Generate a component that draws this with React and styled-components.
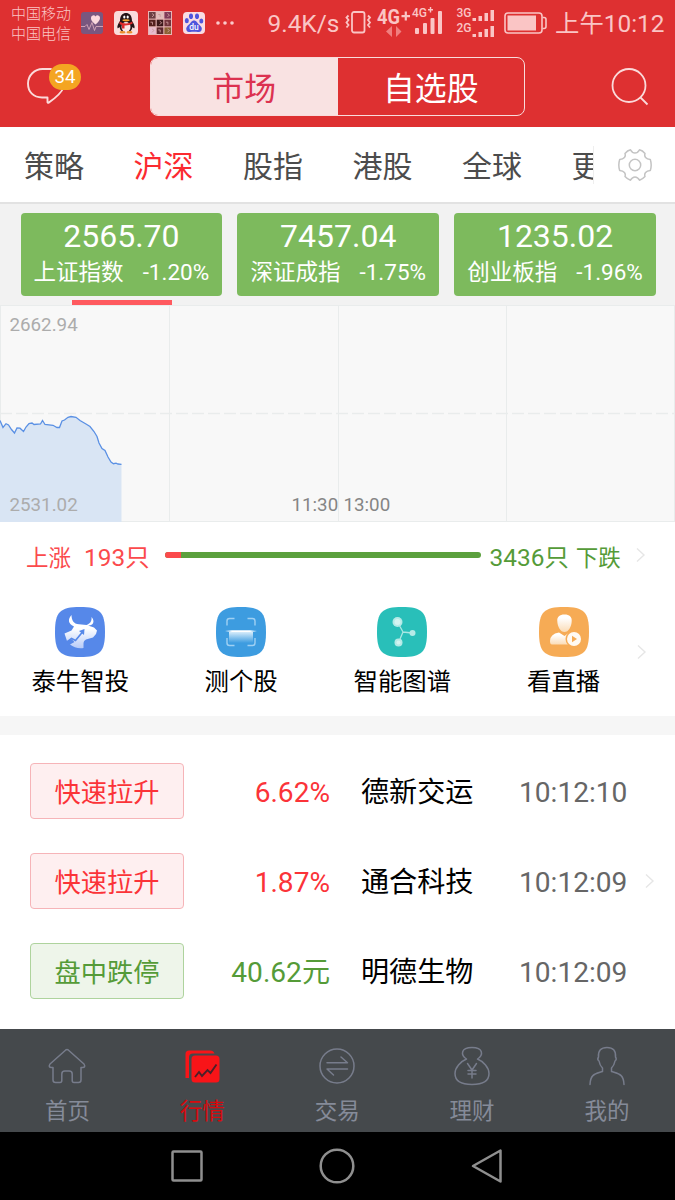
import styled, { createGlobalStyle } from 'styled-components';

const GlobalStyle = createGlobalStyle`
  * {
    box-sizing: border-box;
  }
  body {
    margin: 0;
    background-color: #ffffff;
    font-family: Roboto, 'Noto Sans CJK SC', sans-serif;
    font-weight: 400;
  }
  svg {
    display: block;
    flex-shrink: 0;
  }
`;

const Screen = styled.div`
  display: flex;
  flex-direction: column;
  width: 675px;
  height: 1200px;
  overflow: hidden;
  background-color: #ffffff;
  white-space: nowrap;
`;

/* header */

const Header = styled.header`
  height: 127px;
  background-color: #de3031;
`;

const StatusBar = styled.div`
  display: flex;
  align-items: center;
  height: 46px;
  padding-left: 11px;
  color: #fac5c5;
`;

const Carriers = styled.div`
  flex-shrink: 0;
  width: 70px;
  padding-top: 2px;
  font-size: 15px;
  line-height: 20px;
  font-weight: 300;
`;

const StatusText = styled.span`
  font-size: 24.4px;
  line-height: 44px;
  padding-top: 2px;
  margin-left: ${(props) => props.$left || 0}px;
`;

const NoticeIcons = styled.div`
  display: flex;
  flex-shrink: 0;
  align-items: center;
  gap: 10.5px;
  width: 264px;
`;

const TitleBar = styled.div`
  display: flex;
  align-items: center;
  height: 81px;
  padding: 0 26px;
`;

const MessageButton = styled.div`
  position: relative;
  width: 124px;
  height: 38px;
`;

const Badge = styled.span`
  position: absolute;
  left: 23px;
  top: -4px;
  width: 32px;
  height: 26px;
  border-radius: 13px;
  background-color: #f4a522;
  color: #ffffff;
  font-size: 18.75px;
  line-height: 27px;
  text-align: center;
`;

const Segment = styled.div`
  display: flex;
  width: 375px;
  height: 59px;
  margin-right: 86px;
  border: 1.5px solid #f9dcdc;
  border-radius: 8px;
  overflow: hidden;
`;

const SegmentItem = styled.div`
  flex: 1;
  padding-top: 2px;
  font-size: 31.9px;
  line-height: 58px;
  text-align: center;
  color: ${(props) => (props.$active ? '#dc3250' : '#ffffff')};
  background-color: ${(props) => (props.$active ? '#f9e2e2' : 'transparent')};
`;

/* tabs */

const TabBar = styled.nav`
  display: flex;
  align-items: center;
  height: 77px;
  border-bottom: 2px solid #e2e2e2;
`;

const Tabs = styled.div`
  display: flex;
  gap: 49.5px;
  width: 594px;
  height: 38px;
  padding-left: 24px;
  overflow: hidden;
  border-right: 1px solid #eeeeee;
  margin-right: 24px;
`;

const Tab = styled.span`
  flex-shrink: 0;
  font-size: 30px;
  line-height: 41px;
  color: ${(props) => (props.$active ? '#fb2a30' : '#4c4c4c')};
`;

/* index cards */

const CardStrip = styled.div`
  display: flex;
  gap: 15px;
  height: 96px;
  padding: 9px 19px 0 20.5px;
  background-color: #f2f2f2;
`;

const Card = styled.div`
  flex: 1;
  height: 83px;
  border-radius: 4px;
  background-color: #7dba5d;
  color: #ffffff;
  text-align: center;
`;

const CardValue = styled.div`
  font-size: 32px;
  line-height: 38px;
  padding-top: 4px;
`;

const CardDetail = styled.div`
  display: flex;
  justify-content: center;
  gap: 19px;
  font-size: 22.5px;
  line-height: 34px;
`;

const Underline = styled.div`
  height: 5px;
  background-color: #f2f2f2;
  padding-left: 72px;
  &::after {
    content: '';
    display: block;
    width: 100px;
    height: 5px;
    background-color: #ff5a5f;
  }
`;

/* chart */

const ChartBox = styled.div`
  height: 217px;
`;

/* rise and fall */

const RiseFall = styled.div`
  display: flex;
  align-items: center;
  height: 68px;
  padding-left: 26px;
`;

const Count = styled.span`
  padding-top: 3px;
  font-size: ${(props) => (props.$label ? 22.5 : 24.4)}px;
  line-height: 36px;
  color: ${(props) => (props.$up ? '#fb4a4c' : '#559b38')};
  margin-left: ${(props) => props.$left || 0}px;
`;

const RatioBar = styled.div`
  display: flex;
  width: 316px;
  height: 6px;
  margin: 0 9px 2px 15px;
  border-radius: 3px;
  overflow: hidden;
  background-color: #5ba03d;
`;

const RatioUp = styled.div`
  background-color: #fb4a4c;
`;

const RiseFallArrow = styled.div`
  margin: 0 0 3px 15px;
`;

/* shortcuts */

const Shortcuts = styled.div`
  display: flex;
  height: 126px;
  padding-top: 17px;
`;

const Shortcut = styled.div`
  display: flex;
  flex-direction: column;
  align-items: center;
  width: 161.25px;
  &:first-child {
    width: 160.5px;
  }
`;

const ShortcutLabel = styled.span`
  margin-top: 7px;
  font-size: 24.4px;
  line-height: 36px;
  color: #000000;
`;

const ShortcutArrow = styled.div`
  margin: 37px 0 0 -7px;
`;

const Divider = styled.div`
  height: 19px;
  background-color: #f6f6f6;
`;

/* alerts */

const AlertPanel = styled.div`
  display: flex;
  align-items: center;
  height: 294px;
  padding-bottom: 2px;
`;

const AlertList = styled.div`
  width: 645px;
`;

const AlertRow = styled.div`
  display: flex;
  align-items: center;
  height: 90px;
  padding-left: 30px;
  font-size: 28.1px;
  line-height: 40px;
`;

const Tag = styled.span`
  width: 154px;
  height: 56px;
  border: 1.5px solid ${(props) => (props.$up ? '#f6b4b8' : '#aed39d')};
  border-radius: 4px;
  background-color: ${(props) => (props.$up ? '#feeff0' : '#eef5ea')};
  color: ${(props) => (props.$up ? '#fb3338' : '#559b38')};
  font-size: 26.25px;
  line-height: 58px;
  text-align: center;
`;

const Change = styled.span`
  width: 146px;
  padding-top: 3px;
  text-align: right;
  color: ${(props) => (props.$up ? '#fb3338' : '#559b38')};
`;

const StockName = styled.span`
  width: 158px;
  margin-left: 31px;
  padding-top: 4px;
  color: #000000;
`;

const Time = styled.span`
  padding-top: 3px;
  color: #666666;
`;

/* bottom bars */

const BottomNav = styled.nav`
  display: grid;
  grid-template-columns: repeat(5, 134.9px);
  height: 103px;
  background-color: #45494c;
`;

const NavItem = styled.div`
  display: flex;
  flex-direction: column;
  align-items: center;
  padding-top: 17px;
  color: ${(props) => (props.$active ? '#d60a0e' : '#858b99')};
  font-size: 22.5px;
  line-height: 34px;
`;

const NavLabel = styled.span`
  margin-top: 8px;
`;

const SystemBar = styled.div`
  display: flex;
  flex: 1;
  align-items: center;
  justify-content: center;
  gap: 114px;
  padding-right: 1px;
  background-color: #000000;
`;

const SQUIRCLE = 'M25 0C45 0 50 5 50 25S45 50 25 50 0 45 0 25 5 0 25 0Z';

const HealthIcon = () => (
  <svg width="22" height="22" viewBox="0 0 22 22">
    <rect width="22" height="22" rx="3" fill="#79577f" />
    <path d="M14.500 12.500C11 9.500 10 8 10 6a2.400 2.400 0 0 1 4.500-1.400A2.400 2.400 0 0 1 19 6c0 2-1.500 3.800-4.500 6.500Z" fill="#fbd9dd" />
    <path d="M0 14.500h4l2-2 2 5 3-7 2.500 8 1.500-4h7" fill="none" stroke="#d7a9bb" strokeWidth="0.9" />
  </svg>
);

const PenguinIcon = () => (
  <svg width="24" height="24" viewBox="0 0 24 24">
    <rect width="24" height="24" rx="4" fill="#fadcdc" />
    <path d="M6 10C6 4 9 2 12 2s6 2 6 8c2 3 3 5 2.500 7-.6.800-1.500-.5-2-1-.5 2-1 3-2 4H7.500c-1-1-1.500-2-2-4-.5.500-1.500 1.800-2 1C3 15 4 13 6 10Z" fill="#241417" />
    <ellipse cx="12" cy="16" rx="4.5" ry="5" fill="#fbe7e7" />
    <path d="M5.500 10.500q6.500 4 13 0v2.300q-3.500 2-8 1.800v3H8v-3.500q-2-.6-2.500-1.300Z" fill="#dc2b2c" />
    <ellipse cx="10.300" cy="6" rx="1.100" ry="1.600" fill="#ffffff" />
    <ellipse cx="13.700" cy="6" rx="1.100" ry="1.600" fill="#ffffff" />
    <ellipse cx="12" cy="9.300" rx="3.600" ry="1.100" fill="#f2a130" />
    <ellipse cx="8.500" cy="21.300" rx="3" ry="1.200" fill="#e98e2d" />
    <ellipse cx="15.500" cy="21.300" rx="3" ry="1.200" fill="#e98e2d" />
  </svg>
);

const MOSAIC = ['#6b3f43', '#e0bcba', '#7f3b58', '#54211f', '#3b1719', '#72333b', '#e6bccf', '#5e2930', '#8b6234'];

const AlbumIcon = () => (
  <svg width="24" height="24" viewBox="0 0 24 24">
    <rect width="24" height="24" fill="#e9b5b5" />
    {MOSAIC.map((fill, i) => (
      <g key={i} transform={`translate(${1 + (i % 3) * 7.7} ${1 + Math.floor(i / 3) * 7.7})`}>
        <rect width="6.6" height="6.6" fill={fill} />
        <path d={i % 2 ? 'M1.500 2.500h2v2.500' : 'M3 1.500l2 1.500-2 2'} fill="none" stroke="#c99a9b" strokeWidth="0.9" />
      </g>
    ))}
  </svg>
);

const PawIcon = () => (
  <svg width="22" height="22" viewBox="0 0 22 22">
    <rect width="22" height="22" rx="4" fill="#f9dce3" />
    <g fill="#4f55dc">
      <ellipse cx="8" cy="4.300" rx="2" ry="2.800" />
      <ellipse cx="14" cy="4.300" rx="2" ry="2.800" />
      <ellipse cx="3.800" cy="8.700" rx="2" ry="2.600" />
      <ellipse cx="18.300" cy="9" rx="2" ry="2.600" />
      <path d="M11 8.500c2.500 0 3.200 2.500 5 4 2.300 2 3.500 3.500 2.500 5.700-1.200 2.400-4 1.600-7.500 1.600s-6.500.8-7.500-1.600c-1-2.200.5-4 2.500-5.700 1.800-1.500 2.500-4 5-4Z" />
    </g>
    <text x="11" y="18" fontSize="8.5" fontWeight="500" textAnchor="middle" fill="#ffffff">du</text>
  </svg>
);

const MoreDots = () => (
  <svg width="20" height="6" viewBox="0 0 20 6" fill="#fbcaca">
    <circle cx="3" cy="3" r="1.8" />
    <circle cx="10" cy="3" r="1.8" />
    <circle cx="17" cy="3" r="1.8" />
  </svg>
);

const VibrateIcon = () => (
  <svg width="27" height="24" viewBox="0 0 27 24" fill="none" stroke="#fac5c5" strokeWidth="1.8">
    <rect x="7" y="1" width="12.500" height="20.500" rx="2" />
    <path d="M3.500 4.500l-2 2 2 2.500-2 2.500 2 2.500-2 2.500M23 4.500l2 2-2 2.500 2 2.500-2 2.500 2 2.500" />
  </svg>
);

const SignalIcon = () => (
  <svg width="122" height="46" viewBox="0 0 122 46" fill="#fac5c5" fontFamily="Roboto" fontWeight="700">
    <text x="3" y="24" fontSize="20.5" textLength="23" lengthAdjust="spacingAndGlyphs">4G</text>
    <path d="M27.500 15h8.500v2.200h-8.500zM30.700 11.500h2.200v9h-2.200z" />
    <text x="38" y="16.500" fontSize="12" fontWeight="500" textLength="15" lengthAdjust="spacingAndGlyphs">4G</text>
    <path d="M54 9h5v1.400h-5zM55.800 7h1.400v5.400h-1.400z" />
    <path d="M18 26v11l-6-5.500zM22 26v11l5.500-5.500z" fill="#f07f7f" />
    <rect x="41" y="28" width="4" height="6" rx="1" />
    <rect x="49" y="23" width="4" height="11" rx="1" />
    <rect x="56.500" y="18" width="4" height="16" rx="1" />
    <rect x="64" y="11" width="4" height="23" rx="1" />
    <text x="82.500" y="17" fontSize="12" fontWeight="500" textLength="15" lengthAdjust="spacingAndGlyphs">3G</text>
    <text x="82.500" y="32" fontSize="12" fontWeight="500" textLength="15" lengthAdjust="spacingAndGlyphs">2G</text>
    {[0, 16].map((y) => (
      <g key={y} transform={`translate(98.5 ${y})`}>
        <rect y="18" width="3.500" height="3" />
        <rect x="6" y="16" width="3.500" height="5" />
        <rect x="12" y="13" width="3.500" height="8" />
        <rect x="18" y="10" width="3.500" height="11" />
      </g>
    ))}
  </svg>
);

const BatteryIcon = () => (
  <svg width="43" height="22" viewBox="0 0 43 22">
    <rect x="1" y="1" width="37" height="20" rx="3" fill="none" stroke="#fac5c5" strokeWidth="1.6" />
    <rect x="3.500" y="3.500" width="28.500" height="15" fill="#fac5c5" />
    <path d="M38.500 5.500h1.500q2 0 2 2v7q0 2-2 2h-1.500" fill="none" stroke="#fac5c5" strokeWidth="1.6" />
  </svg>
);

const StatusGap = styled.div`
  flex-shrink: 0;
  width: ${(props) => props.$width}px;
`;

const MessageIcon = () => (
  <svg width="40" height="38" viewBox="0 0 40 38" fill="none" stroke="#fbdada" strokeWidth="1.9" strokeLinejoin="round" strokeLinecap="round">
    <path d="M25 1H16.500A14.500 14.500 0 0 0 2 15.500c0 8.500 5.500 14 14 14h5.500v4.800q.2 1 1.200.3C28 31 35 26 37.500 19.500" />
  </svg>
);

const SearchIcon = () => (
  <svg width="38" height="38" viewBox="0 0 38 38" fill="none" stroke="#fbdada" strokeWidth="1.8">
    <circle cx="18" cy="17.500" r="16.500" />
    <path d="M29.500 29.500l7 7" />
  </svg>
);

const GearIcon = () => (
  <svg width="34" height="34" viewBox="0 0 34 34" fill="none" stroke="#c4c4c4" strokeWidth="1.5" strokeLinejoin="round">
    <path d="M7 5.500Q9.500 2.500 12.500 1.800C14 4.500 15.500 5 17 5s3-.5 4.500-3.200Q24.500 2.500 27 5.500c-1 3 .8 5.700 5.300 6 1.200 3.700 1.200 7.300 0 11-4.500.3-6.300 3-5.300 6-2 2.200-3.500 3-5.500 3.700C20 29.500 18.500 29 17 29s-3 .5-4.500 3.200C10.500 31.500 9 30.700 7 28.500c1-3-.8-5.700-5.300-6-1.200-3.700-1.200-7.300 0-11 4.500-.3 6.300-3 5.300-6Z" />
    <circle cx="17" cy="17" r="5.7" />
  </svg>
);

const Chevron = () => (
  <svg width="10" height="16" viewBox="0 0 10 16" fill="none" stroke="#e6e6e6" strokeWidth="1.4">
    <path d="M1 1.500L8 8l-7 6.500" />
  </svg>
);

const LINE =
  'M0 115.500L3 122.500L6 118.700L8.500 120L11.500 124.500L14.500 128L17 123L20 123.200L23.500 126.500L26 122L29 118.500L32 118L34 119.500L40.500 119L42.500 115.500L45 119.500L53 120.300L57 122.500L59.500 122.500L62 116L64.500 115L68 112.300L71 111.500L76 112.300L80 115.500L86 119L90 121.500L94 126.500L97 131.500L99 138L102 143.500L105 145.500L108 152L111 157L113.500 158.700L116 158.200L118 159L121.500 159.300';

const IntradayChart = () => (
  <svg width="675" height="217" viewBox="0 0 675 217">
    <rect width="675" height="217" fill="#f8f8f8" />
    <g stroke="#e9ecec" strokeWidth="1">
      <path d="M0 0.500H675M0 216.500H675M0.500 0V217M169.500 0V217M338.500 0V217M506.500 0V217M674.500 0V217" />
      <path d="M0 108.500H675" strokeWidth="1.500" strokeDasharray="12 4" />
    </g>
    <path d={`${LINE}V217H0Z`} fill="#d9e5f4" />
    <path d={LINE} fill="none" stroke="#5a90e4" strokeWidth="1.3" />
    <g fontSize="18.75" fill="#acacac">
      <text x="9.500" y="25.500">2662.94</text>
      <text x="9.500" y="206">2531.02</text>
      <text x="291.500" y="205.500" fill="#858585">11:30</text>
      <text x="343.500" y="205.500" fill="#858585">13:00</text>
    </g>
  </svg>
);

const BullIcon = () => (
  <svg width="50" height="50" viewBox="0 0 50 50">
    <defs>
      <linearGradient id="bull" x1="0" y1="0" x2="0" y2="1">
        <stop offset="0.4" stopColor="#ffffff" />
        <stop offset="1" stopColor="#b7cbf8" />
      </linearGradient>
    </defs>
    <path d={SQUIRCLE} fill="#5688e9" />
    <path d="M16.500 8C13 12 12.500 16.500 19 19.500L16.500 23.500 9.500 26.500 12 34 17 32.500 19.500 35 15 37.500Q20.500 42 28.500 41V36Q28.500 33.500 31 32.500L38 30.500 41 27 42 23.500 39 20.500 33 18.500C38 19 40.500 14.500 36.500 10 37 14.500 35 16.500 31.500 18L24 17.200C18.500 17 16.500 13 16.500 8Z" fill="url(#bull)" />
    <path d="M12 35l4.500-3.500 4 2L27.500 25" fill="none" stroke="#5688e9" strokeWidth="1.7" />
    <path d="M24 24l5.500-2-.5 6z" fill="#5688e9" />
  </svg>
);

const ScanIcon = () => (
  <svg width="50" height="50" viewBox="0 0 50 50">
    <defs>
      <linearGradient id="scan" x1="0" y1="0" x2="0" y2="1">
        <stop offset="0" stopColor="#d6ecfb" />
        <stop offset="1" stopColor="#3d9ce0" />
      </linearGradient>
    </defs>
    <path d={SQUIRCLE} fill="#3d9ce0" />
    <path d="M11 18.500V14q0-2.500 2.500-2.500H18.500M31.500 11.500H36.500q2.500 0 2.500 2.500v4.500M39 31v5q0 2.500-2.500 2.500H31.500M18.500 38.500H13.500q-2.500 0-2.500-2.500v-5" fill="none" stroke="#9fd0f3" strokeWidth="1.4" />
    <rect x="13" y="25" width="24" height="11" fill="url(#scan)" />
    <path d="M9 24l7-.8h18l7 .8-7 1H16z" fill="#ffffff" />
  </svg>
);

const GraphIcon = () => (
  <svg width="50" height="50" viewBox="0 0 50 50">
    <path d={SQUIRCLE} fill="#29bfb9" />
    <path d="M20.500 15L26 25M26 25l9 1M26 25l-4.500 10.500" stroke="#a9e7e3" strokeWidth="1.3" />
    <circle cx="20.500" cy="15" r="5" fill="#b5eae7" />
    <circle cx="35.500" cy="26" r="3" fill="#b5eae7" />
    <circle cx="21.500" cy="35.500" r="4" fill="#b5eae7" />
    <circle cx="20.500" cy="15" r="3" fill="#d5f4f1" />
    <circle cx="21.500" cy="35.500" r="2" fill="#d5f4f1" />
  </svg>
);

const LiveIcon = () => (
  <svg width="50" height="50" viewBox="0 0 50 50">
    <defs>
      <linearGradient id="live" x1="0" y1="0" x2="0" y2="1">
        <stop offset="0.2" stopColor="#ffffff" />
        <stop offset="1" stopColor="#fbdcb6" />
      </linearGradient>
    </defs>
    <path d={SQUIRCLE} fill="#f6ab55" />
    <path d="M25.500 7.500c5 0 7.500 2.500 7.200 6.500-.2 6-3.200 11-7.200 11s-7-5-7.200-11c-.3-4 2.200-6.500 7.200-6.500Z" fill="url(#live)" />
    <path d="M11 34q0-7 9-8.500l5.500 3.500 5-3.500 4 1v11H13q-2 0-2-3.500Z" fill="url(#live)" />
    <circle cx="35" cy="32" r="8.500" fill="#f6ab55" />
    <circle cx="35" cy="32" r="7" fill="#fffaf3" />
    <path d="M33 28.800l5 3.200-5 3.200z" fill="#f6ab55" />
  </svg>
);

const navStroke = { fill: 'none', stroke: '#777c8b', strokeWidth: 1.5, strokeLinejoin: 'round', strokeLinecap: 'round' };

const HomeIcon = () => (
  <svg width="40" height="40" viewBox="0 0 40 40" {...navStroke}>
    <path d="M18.500 4.200q1.500-1.200 3 0L37 18q2 3.500-1.500 3.500H34V34q0 2.500-2.500 2.500H27q-1.800 0-1.800-2V28q0-3-3-3h-4.400q-3 0-3 3v6.500q0 2-1.800 2H8.500Q6 36.500 6 34V21.500H4.500Q1 21.500 3 18Z" />
  </svg>
);

const QuotesIcon = () => (
  <svg width="40" height="40" viewBox="0 0 40 40">
    <path d="M3.500 32V8q0-3.500 3.500-3.500H28q3.500 0 4.500 3H11q-4 0-4 4V32Z" fill="#f81418" />
    <rect x="9.500" y="9.500" width="28" height="27" rx="3.500" fill="#f81418" />
    <path d="M13 31l4-5 3 4 5.500-6 3 3 6-8.500" fill="none" stroke="#4a2029" strokeWidth="1.9" />
  </svg>
);

const TradeIcon = () => (
  <svg width="40" height="40" viewBox="0 0 40 40" {...navStroke}>
    <circle cx="20" cy="20" r="17" />
    <path d="M10 16.800H30.500L24 11M30.500 23H10l6.500 6" />
  </svg>
);

const MoneyIcon = () => (
  <svg width="40" height="40" viewBox="0 0 40 40" {...navStroke}>
    <path d="M14.500 13C8.500 9 8.500 1.500 20 1.500S31.500 9 25.500 13c6 2.500 11.500 8.500 11.500 14.500C37 35 31 38.500 20 38.500S3 35 3 27.500C3 21.500 8.500 15.500 14.500 13Z" />
    <path d="M15.500 17.500L20 24l4.500-6.500M20 24v8M16 24.500h8M16 28h8" />
  </svg>
);

const PersonIcon = () => (
  <svg width="40" height="40" viewBox="0 0 40 40" {...navStroke}>
    <path d="M3 38.500C3.500 28 8 28 15.500 25.500V22c-2-2-3-4-3.500-7-1.500-1-1.500-2.500-.5-4C11 4.500 14 1.500 20 1.500s9 3 8.500 9.500c1 1.500 1 3-.5 4-.5 3-1.500 5-3.500 7v3.500C32 28 36.500 28 37 38.500" />
  </svg>
);

const tabs = ['策略', '沪深', '股指', '港股', '全球', '更多'];

const indexes = [
  { name: '上证指数', value: '2565.70', change: '-1.20%' },
  { name: '深证成指', value: '7457.04', change: '-1.75%' },
  { name: '创业板指', value: '1235.02', change: '-1.96%' },
];

const shortcuts = [
  { label: '泰牛智投', Icon: BullIcon },
  { label: '测个股', Icon: ScanIcon },
  { label: '智能图谱', Icon: GraphIcon },
  { label: '看直播', Icon: LiveIcon },
];

const alerts = [
  { tag: '快速拉升', change: '6.62%', name: '德新交运', time: '10:12:10', up: true },
  { tag: '快速拉升', change: '1.87%', name: '通合科技', time: '10:12:09', up: true },
  { tag: '盘中跌停', change: '40.62元', name: '明德生物', time: '10:12:09', up: false },
];

const navItems = [
  { label: '首页', Icon: HomeIcon },
  { label: '行情', Icon: QuotesIcon },
  { label: '交易', Icon: TradeIcon },
  { label: '理财', Icon: MoneyIcon },
  { label: '我的', Icon: PersonIcon },
];

const rise = 193;
const fall = 3436;

const App = () => {
  return (
    <>
      <GlobalStyle />
      <Screen>
        <Header>
          <StatusBar>
            <Carriers>
              中国移动
              <br />
              中国电信
            </Carriers>
            <NoticeIcons>
              <HealthIcon />
              <PenguinIcon />
              <AlbumIcon />
              <PawIcon />
              <MoreDots />
              <StatusText $left={22}>9.4K/s</StatusText>
            </NoticeIcons>
            <VibrateIcon />
            <StatusGap $width={2} />
            <SignalIcon />
            <StatusGap $width={8} />
            <BatteryIcon />
            <StatusText $left={8}>上午10:12</StatusText>
          </StatusBar>
          <TitleBar>
            <MessageButton>
              <MessageIcon />
              <Badge>34</Badge>
            </MessageButton>
            <Segment>
              <SegmentItem $active>市场</SegmentItem>
              <SegmentItem>自选股</SegmentItem>
            </Segment>
            <SearchIcon />
          </TitleBar>
        </Header>

        <TabBar>
          <Tabs>
            {tabs.map((tab) => (
              <Tab key={tab} $active={tab === '沪深'}>{tab}</Tab>
            ))}
          </Tabs>
          <GearIcon />
        </TabBar>

        <CardStrip>
          {indexes.map((item) => (
            <Card key={item.name}>
              <CardValue>{item.value}</CardValue>
              <CardDetail>
                <span>{item.name}</span>
                <span>{item.change}</span>
              </CardDetail>
            </Card>
          ))}
        </CardStrip>
        <Underline />
        <ChartBox>
          <IntradayChart />
        </ChartBox>

        <RiseFall>
          <Count $up $label>上涨</Count>
          <Count $up $left={13}>{rise}只</Count>
          <RatioBar>
            <RatioUp style={{ width: `${(rise / (rise + fall)) * 100}%` }} />
          </RatioBar>
          <Count>{fall}只</Count>
          <Count $label $left={7}>下跌</Count>
          <RiseFallArrow>
            <Chevron />
          </RiseFallArrow>
        </RiseFall>

        <Shortcuts>
          {shortcuts.map(({ label, Icon }) => (
            <Shortcut key={label}>
              <Icon />
              <ShortcutLabel>{label}</ShortcutLabel>
            </Shortcut>
          ))}
          <ShortcutArrow>
            <Chevron />
          </ShortcutArrow>
        </Shortcuts>

        <Divider />

        <AlertPanel>
          <AlertList>
            {alerts.map((item) => (
              <AlertRow key={item.name}>
                <Tag $up={item.up}>{item.tag}</Tag>
                <Change $up={item.up}>{item.change}</Change>
                <StockName>{item.name}</StockName>
                <Time>{item.time}</Time>
              </AlertRow>
            ))}
          </AlertList>
          <Chevron />
        </AlertPanel>

        <BottomNav>
          {navItems.map(({ label, Icon }) => (
            <NavItem key={label} $active={label === '行情'}>
              <Icon />
              <NavLabel>{label}</NavLabel>
            </NavItem>
          ))}
        </BottomNav>

        <SystemBar>
          <svg width="36" height="36" viewBox="0 0 36 36" fill="none" stroke="#8f8f8f" strokeWidth="2.5">
            <rect x="3.500" y="3.500" width="29" height="29" rx="1" />
          </svg>
          <svg width="36" height="36" viewBox="0 0 36 36" fill="none" stroke="#8f8f8f" strokeWidth="2.5">
            <circle cx="18" cy="18" r="16.3" />
          </svg>
          <svg width="36" height="36" viewBox="0 0 36 36" fill="none" stroke="#8f8f8f" strokeWidth="2.5" strokeLinejoin="round">
            <path d="M31.500 2.500v31L4 18z" />
          </svg>
        </SystemBar>
      </Screen>
    </>
  );
};

export default App;
